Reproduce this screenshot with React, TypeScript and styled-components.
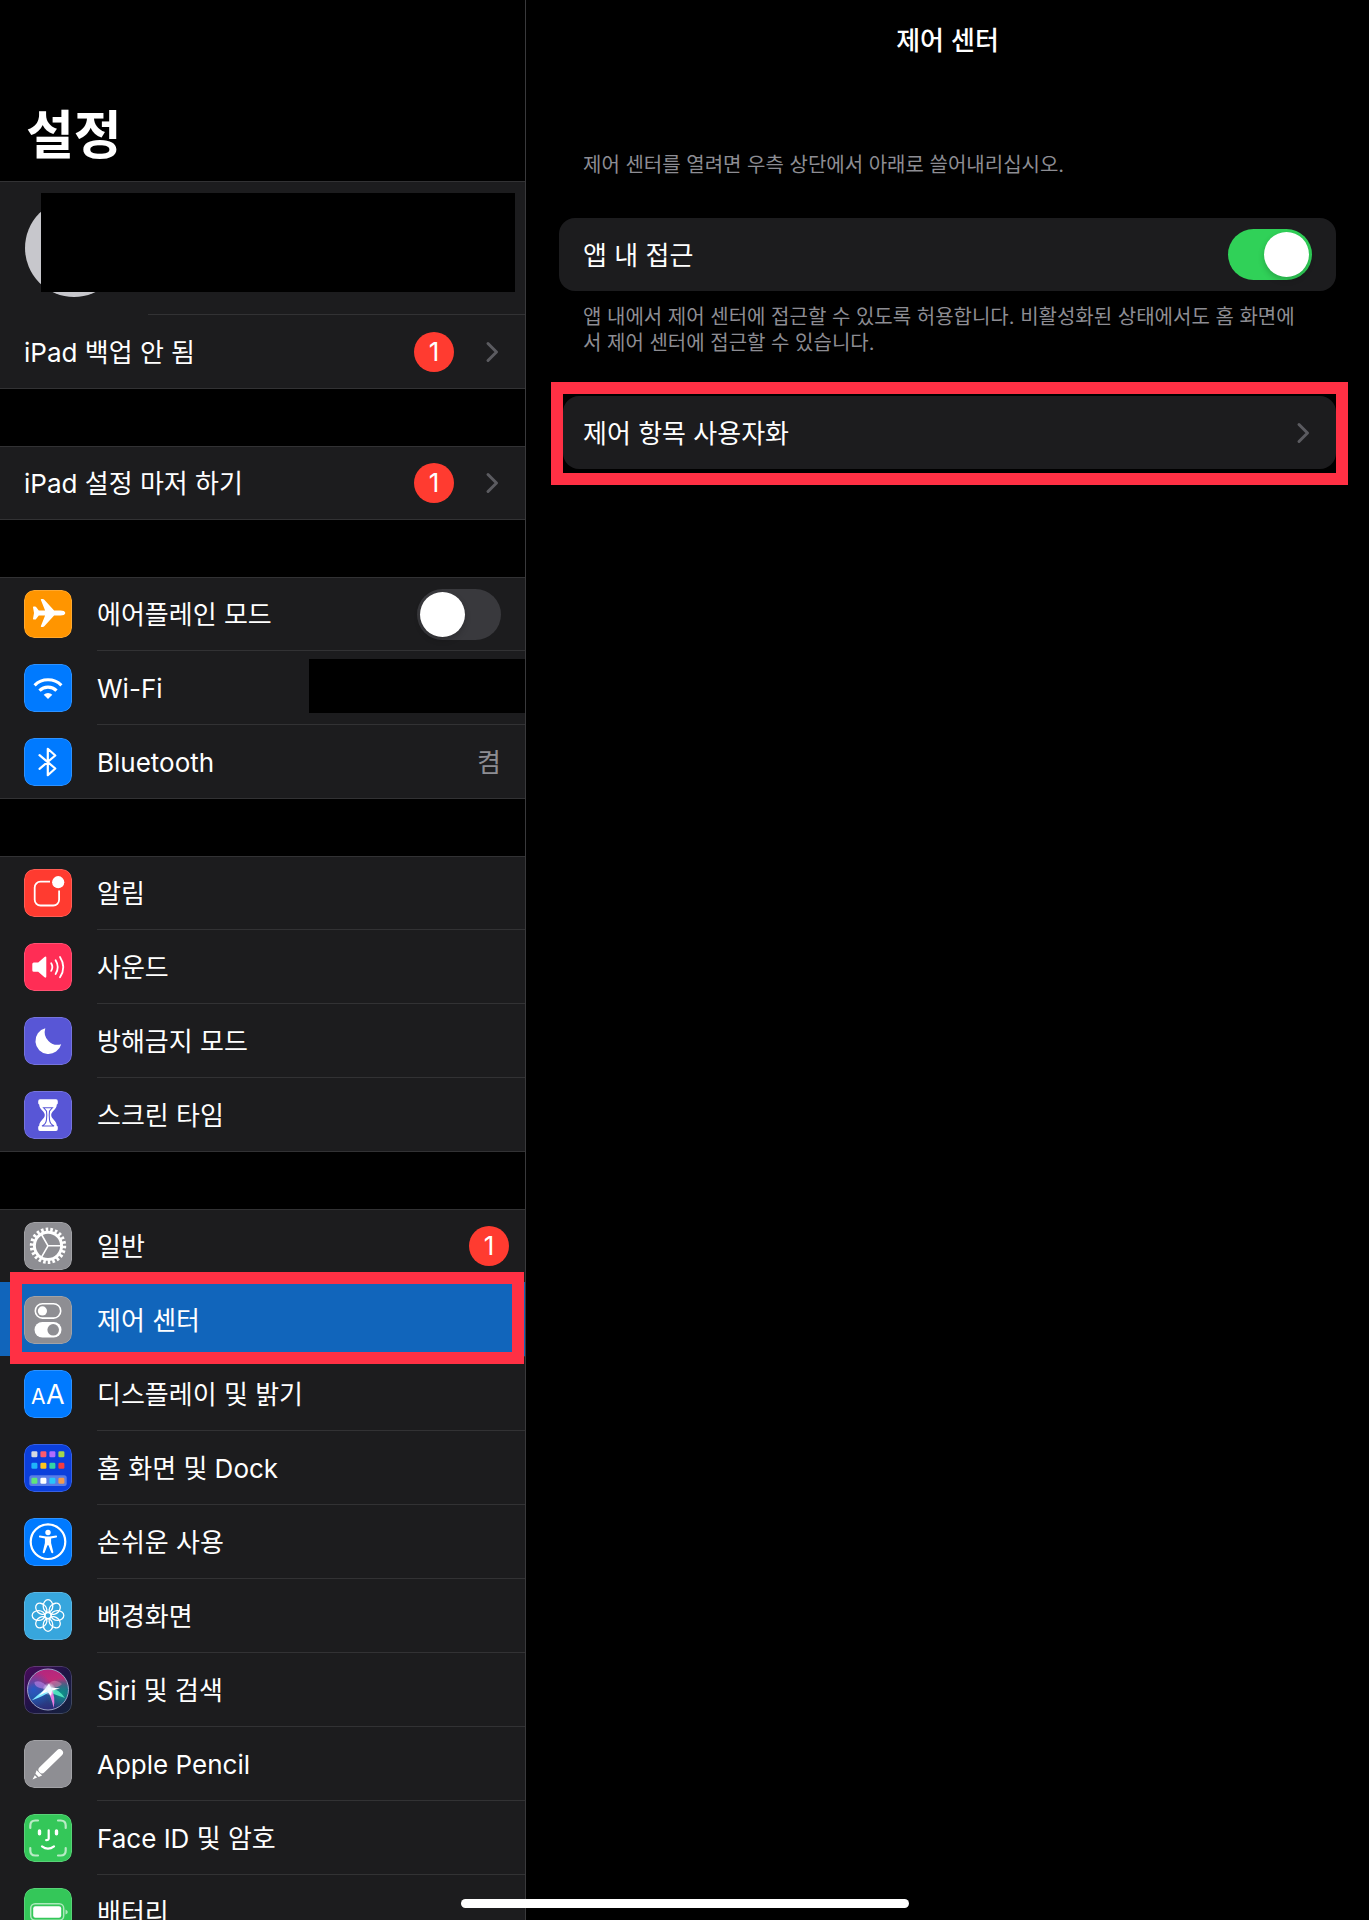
import React, { useState } from "react";
import styled, { createGlobalStyle, css } from "styled-components";

const GlobalStyle = createGlobalStyle`
  *, *::before, *::after { box-sizing: border-box; }
  body {
    margin: 0;
    background: #000;
    color: #fff;
    font-family: Inter, "Noto Sans CJK KR", sans-serif;
    font-size: 26px;
    line-height: 36px;
  }
`;

const Screen = styled.div`
  display: grid;
  grid-template-columns: minmax(320px, 526px) minmax(0, 1fr);
  height: 100vh;
  background: #000;
  overflow: hidden;
`;

const Sidebar = styled.nav`
  min-height: 0;
  border-right: 1px solid #39393b;
  overflow-y: auto;
  scrollbar-width: none;
`;

const SidebarTitle = styled.h1`
  display: flex;
  align-items: flex-end;
  height: 181px;
  margin: 0;
  padding: 0 26px 15px;
  font-size: 52px;
  line-height: 60px;
  font-weight: 700;
`;

const Groups = styled.div`
  display: flex;
  flex-direction: column;
  gap: 57px;
`;

const Group = styled.div`
  background: #1c1c1e;
  border-bottom: 1px solid #323234;
`;

const rowBase = css<{ $inset: number; $selected?: boolean }>`
  position: relative;
  display: flex;
  align-items: center;
  height: 74px;
  padding: 1px 24px 0;
  color: #fff;
  text-decoration: none;
  background: ${(p) => (p.$selected ? "#1165bb" : "transparent")};

  &::before {
    content: "";
    position: absolute;
    top: 0;
    left: ${(p) => p.$inset}px;
    right: 0;
    height: 1px;
    background: #323234;
  }

  &:first-child {
    height: 73px;
  }

  &:first-child::before {
    left: 0;
  }
`;

const LinkRow = styled.a<{ $inset: number; $selected?: boolean }>`
  ${rowBase}

  &[aria-current]::before,
  &[aria-current] + &::before {
    display: none;
  }
`;

const SwitchRow = styled.label<{ $inset: number }>`
  ${rowBase}
`;

const ProfileRow = styled.a`
  display: block;
  height: 133px;
  padding: 17px 10px 0 25px;
  border-top: 1px solid #323234;
`;

const Avatar = styled.div`
  position: relative;
  width: 98px;
  height: 98px;
  border-radius: 50%;
  background: #c7c7cc;
`;

const ProfileCover = styled.div`
  position: relative;
  height: 99px;
  margin: -104px 0 0 16px;
  background: #000;
`;

const NetworkCover = styled.span`
  width: 216px;
  height: 54px;
  margin: 0 -24px 4px 0;
  background: #000;
`;

const Tile = styled.svg`
  flex: none;
  width: 48px;
  height: 48px;
  margin-right: 25px;
  border-radius: 10px;
`;

const RowText = styled.span`
  flex: 1;
  min-width: 0;
  padding-top: 2px;
  white-space: nowrap;
`;

const RowValue = styled.span`
  padding-top: 2px;
  color: #8d8d93;
`;

const Badge = styled.span<{ $edge?: boolean }>`
  display: flex;
  align-items: center;
  justify-content: center;
  width: 40px;
  height: 40px;
  margin-right: ${(p) => (p.$edge ? -8 : 31)}px;
  border-radius: 50%;
  background: #ff3b30;
`;

const ChevronIcon = styled.svg`
  flex: none;
  width: 14px;
  height: 22px;
  margin-right: 2px;
  fill: none;
  stroke: #5b5b60;
  stroke-width: 3;
  stroke-linecap: round;
  stroke-linejoin: round;
`;

const Toggle = styled.input`
  appearance: none;
  display: flex;
  flex: none;
  width: 84px;
  height: 51px;
  margin: 0;
  padding: 3px;
  border-radius: 26px;
  background: #39393d;

  &::before {
    content: "";
    width: 45px;
    height: 45px;
    border-radius: 50%;
    background: #fff;
    box-shadow: 0 3px 6px rgba(0, 0, 0, 0.2);
  }

  &:checked {
    justify-content: flex-end;
    background: #30d158;
  }
`;

const Highlight = styled.span`
  position: absolute;
  inset: -10px 1px -8px 10px;
  z-index: 1;
  border: 12px solid #ff3044;
  pointer-events: none;
`;

const Detail = styled.main`
  display: flex;
  flex-direction: column;
  padding: 0 33px;
`;

const DetailTitle = styled.h2`
  margin: 0;
  padding: 23px 0;
  font-size: 26px;
  line-height: 36px;
  font-weight: 500;
  text-align: center;
`;

const Caption = styled.p`
  margin: 0;
  padding: 0 24px;
  color: #8d8d93;
  font-size: 20px;
  line-height: 26px;
  word-break: break-all;
`;

const Intro = styled(Caption)`
  padding-top: 70px;
  padding-bottom: 40px;
`;

const Footnote = styled(Caption)`
  padding-top: 13px;
  padding-bottom: 26px;
`;

const cardBase = css`
  display: flex;
  align-items: center;
  height: 73px;
  padding: 0 24px;
  border-radius: 16px;
  background: #1c1c1e;
  color: #fff;
  text-decoration: none;
`;

const CardSwitch = styled.label`
  ${cardBase}
`;

const CardLink = styled.a`
  ${cardBase}
  padding-left: 20px;
`;

const CardFrame = styled.div`
  margin: 0 -12px 0 -8px;
  padding: 2px 0 4px;
  border: 12px solid #ff3044;
`;

const HomeIndicator = styled.div`
  position: fixed;
  left: 50%;
  bottom: 12px;
  z-index: 2;
  width: 448px;
  height: 9px;
  margin-left: -224px;
  border-radius: 5px;
  background: #fff;
`;

function Chevron() {
  return (
    <ChevronIcon viewBox="0 0 14 22" aria-hidden="true">
      <path d="M3 2.5 11.5 11 3 19.5" />
    </ChevronIcon>
  );
}

function IconTile({ fill, children }: { fill: string; children: React.ReactNode }) {
  return (
    <Tile viewBox="0 0 48 48" aria-hidden="true">
      <rect width="48" height="48" rx="10" fill={fill} />
      {children}
      <rect x="0.5" y="0.5" width="47" height="47" rx="9.5" fill="none" stroke="#fff" strokeOpacity="0.18" />
    </Tile>
  );
}

const eighths = [0, 45, 90, 135, 180, 225, 270, 315];

const icons = {
  airplane: (
    <IconTile fill="#ff9500">
      <path
        fill="#fff"
        d="M41.3 23c0 1.7-2.3 2.5-4.8 2.5h-6.4L20.3 36.3q-.7.7-1.5.7h-1.3q-1 0-.6-1l4.2-10.5h-6.3l-2.700 3.500q-.4.5-1 .5H9.700q-.8 0-.7-.8L10 23l-1-5.700q-.1-.8.7-.8h1.400q.6 0 1 .5l2.700 3.500h6.300L16.900 10q-.4-1 .6-1h1.300q.8 0 1.500.7l9.800 10.800h6.400c2.500 0 4.800.8 4.800 2.500Z"
      />
    </IconTile>
  ),
  wifi: (
    <IconTile fill="#007aff">
      <g fill="none" stroke="#fff" strokeWidth="3.2">
        <path d="M10.600 21.300a19 19 0 0 1 26.800 0" />
        <path d="M15.500 26.600a12 12 0 0 1 17 0" />
      </g>
      <path fill="#fff" d="m24 35-4.300-4.300a6.200 6.200 0 0 1 8.600 0Z" />
    </IconTile>
  ),
  bluetooth: (
    <IconTile fill="#007aff">
      <path
        fill="none"
        stroke="#fff"
        strokeWidth="2.2"
        strokeLinejoin="round"
        strokeLinecap="round"
        d="m15.500 17.200 15.800 13.300-7.500 6.700V10.800l7.500 6.700-15.800 13.300"
      />
    </IconTile>
  ),
  notifications: (
    <IconTile fill="#ff3b30">
      <path
        fill="none"
        stroke="#fff"
        strokeWidth="1.8"
        d="M26 12.600h-9.500a5.800 5.800 0 0 0-5.800 5.800v12.300a5.800 5.800 0 0 0 5.800 5.800h12.800a5.800 5.800 0 0 0 5.800-5.800V21.500"
      />
      <circle cx="34.2" cy="13.2" r="6.1" fill="#fff" />
    </IconTile>
  ),
  sound: (
    <IconTile fill="#ff2d55">
      <path
        fill="#fff"
        d="M9.800 19.500h4.400l6.300-5.600q1.800-1.200 1.800.7v19q0 1.900-1.800.7l-6.300-5.600H9.800q-1.500 0-1.500-1.500V21q0-1.500 1.500-1.500Z"
      />
      <g fill="none" stroke="#fff" strokeWidth="1.8" strokeLinecap="round">
        <path d="M27.200 20.300q2.300 3.800 0 7.600" />
        <path d="M31.600 17.200q4.300 6.900 0 13.800" />
        <path d="M36 13.900q6.600 10.200 0 20.400" />
      </g>
    </IconTile>
  ),
  moon: (
    <IconTile fill="#5856d6">
      <path fill="#fff" d="M21.300 11.200A13.100 13.100 0 1 0 37.200 27.200 12.800 12.800 0 0 1 21.300 11.200Z" />
    </IconTile>
  ),
  hourglass: (
    <IconTile fill="#5856d6">
      <path
        fill="#fff"
        d="M16 8.200h16q1.800 0 1.800 2v2q0 .8-1 1.200c0 5-5.600 6.600-5.600 10.700s5.600 5.700 5.600 10.600q1 .4 1 1.300v2q0 2-1.800 2H16q-1.800 0-1.800-2v-2q0-.9 1-1.300c0-4.900 5.600-6.500 5.600-10.600s-5.600-5.700-5.600-10.700q-1-.4-1-1.200v-2q0-2 1.800-2Z"
      />
      <path
        fill="none"
        stroke="#5856d6"
        strokeWidth="1.1"
        d="M19.500 16.700h9q-1.800 2-3 3.500-.6 4 0 8.500.4 4.200 4.500 6.300H18q4.100-2.100 4.500-6.300.6-4.500 0-8.500-1.200-1.500-3-3.500Z"
      />
    </IconTile>
  ),
  gear: (
    <IconTile fill="#8e8e93">
      <g fill="none" stroke="#fff" transform="translate(24 23.8)">
        <circle r="16.2" strokeWidth="4" pathLength="44" strokeDasharray="1.1 0.9" />
        <circle r="13.6" strokeWidth="2.9" />
        <path strokeWidth="1.6" d="M0 0h13M0 0l-6.500-11.300M0 0l-6.500 11.300" />
      </g>
    </IconTile>
  ),
  controls: (
    <IconTile fill="#8e8e93">
      <rect x="11.3" y="7.7" width="25.4" height="14.4" rx="7.2" fill="none" stroke="#fff" strokeWidth="1.6" />
      <circle cx="18.4" cy="14.9" r="4.6" fill="#fff" />
      <rect x="10.5" y="26" width="27" height="15.6" rx="7.8" fill="#fff" />
      <circle cx="29.2" cy="33.8" r="5.8" fill="#8e8e93" />
    </IconTile>
  ),
  display: (
    <IconTile fill="#007aff">
      <text x="7" y="34" fontFamily="Inter, sans-serif" fontSize="21" fill="#fff">A</text>
      <text x="22" y="34" fontFamily="Inter, sans-serif" fontSize="27" fill="#fff">A</text>
    </IconTile>
  ),
  home: (
    <IconTile fill="#0b3fdc">
      <rect x="5.3" y="31.3" width="37.4" height="10.7" rx="2.5" fill="#fff" fillOpacity="0.32" />
      {[
        ["#d5d9e2", "#fb5a6c", "#b06cff", "#a4d64c"],
        ["#1fb4fa", "#fcc41c", "#34d3a4", "#f43b40"],
        ["#5fe57a", "#ffffff", "#27c4fb", "#f29a4e"],
      ].map((line, r) =>
        line.map((color, c) => (
          <rect key={`${r}${c}`} x={7.4 + c * 9} y={[7.2, 18.8, 33.7][r]} width="6" height="6" rx="1.3" fill={color} />
        ))
      )}
    </IconTile>
  ),
  accessibility: (
    <IconTile fill="#007aff">
      <circle cx="24" cy="23.7" r="17.3" fill="none" stroke="#fff" strokeWidth="2.2" />
      <circle cx="24" cy="14.5" r="2.7" fill="#fff" />
      <path
        fill="#fff"
        d="M15.900 17.600 22.300 18.600h3.400l6.400-1q1 0 1 .9t-.8 1l-5.200 1.100v4.400l2.200 9.100q.2 1-.8 1.200-.9.200-1.200-.7L24.500 27.300h-1L20.700 34.600q-.3.9-1.200.7-1-.2-.8-1.200l2.200-9.100v-4.400l-5.200-1.100q-.8-.1-.8-1t1-.9Z"
      />
    </IconTile>
  ),
  wallpaper: (
    <IconTile fill="#37a6dd">
      <g fill="none" stroke="#fff" strokeWidth="1.3" transform="translate(24 23.5)">
        {eighths.map((a) => (
          <ellipse key={a} cy="-9.5" rx="4.8" ry="6.3" transform={`rotate(${a})`} />
        ))}
        <circle r="3" />
      </g>
    </IconTile>
  ),
  siri: (
    <IconTile fill="url(#siri-tile)">
      <defs>
        <linearGradient id="siri-tile" x1="0" y1="0" x2="1" y2="1">
          <stop offset="0" stopColor="#4a0a5c" />
          <stop offset="0.5" stopColor="#1d1445" />
          <stop offset="1" stopColor="#14233c" />
        </linearGradient>
        <linearGradient id="siri-orb" x1="0.4" y1="0" x2="0.55" y2="1">
          <stop offset="0" stopColor="#b3267f" />
          <stop offset="0.3" stopColor="#c02a78" />
          <stop offset="0.6" stopColor="#25508f" />
          <stop offset="1" stopColor="#2d2a78" />
        </linearGradient>
        <radialGradient id="siri-teal" cx="0.85" cy="0.6" r="0.4">
          <stop offset="0" stopColor="#0f8f86" />
          <stop offset="1" stopColor="#0f8f86" stopOpacity="0" />
        </radialGradient>
        <radialGradient id="siri-blue" cx="0.15" cy="0.5" r="0.45">
          <stop offset="0" stopColor="#2459c4" />
          <stop offset="1" stopColor="#2459c4" stopOpacity="0" />
        </radialGradient>
        <radialGradient id="siri-core">
          <stop offset="0" stopColor="#fff" />
          <stop offset="0.4" stopColor="#dff3ff" stopOpacity="0.7" />
          <stop offset="1" stopColor="#fff" stopOpacity="0" />
        </radialGradient>
      </defs>
      <circle cx="24" cy="23.5" r="20.3" fill="url(#siri-orb)" />
      <circle cx="24" cy="23.5" r="20.3" fill="url(#siri-teal)" />
      <circle cx="24" cy="23.5" r="20.3" fill="url(#siri-blue)" />
      <path fill="#c78cf0" fillOpacity="0.55" d="M25 23Q10 23 10.500 16 18 13 25 23Z" />
      <path fill="#f08bb8" fillOpacity="0.45" d="M23 22Q27 10 38 18 34 23 23 22Z" />
      <path fill="#7fe8ff" d="M25 20.500Q17 26 7.500 34.500 20 30 27 25Z" />
      <path fill="#4fe0bd" d="M24 21Q35 23 41 32 32 29 23 25.500Z" />
      <path fill="#e57be0" d="M22 22Q28 32 29.500 42 32 31 27 22Z" />
      <path fill="#fff" d="M25 17.500 27 21.500 36 22.500 28 24.500 27 30 23.500 25.500 15 29.500 21.500 22.500Z" />
      <circle cx="25" cy="23" r="6.5" fill="url(#siri-core)" />
      <circle cx="24" cy="23.5" r="20.5" fill="none" stroke="#b9c4e4" strokeOpacity="0.8" />
    </IconTile>
  ),
  pencil: (
    <IconTile fill="#8e8e93">
      <path stroke="#fff" strokeWidth="7" strokeLinecap="round" d="M35.500 12.800 18 29.800" />
      <path fill="#fff" d="m12.600 30.200 5.500 5.400-3.400 1.400-3.300-3.300ZM10.800 35.200l2.300 2.400-4.600 2Z" />
    </IconTile>
  ),
  face: (
    <IconTile fill="#34c759">
      <g fill="none" stroke="#fff" strokeWidth="2.2" strokeLinecap="round">
        <path
          strokeOpacity="0.65"
          d="M6.300 14v-2.500q0-5 5-5H14M34 6.500h2.700q5 0 5 5V14M41.700 34v2.500q0 5-5 5H34M14 41.500h-2.700q-5 0-5-5V34"
        />
        <path d="M24.700 16.300v8.200q0 1.500-2.500 1.700M18 32.300q6 4.600 12 0" />
        <path strokeWidth="3.4" d="M15.500 17v2.800M32.500 17v2.800" />
      </g>
    </IconTile>
  ),
  battery: (
    <IconTile fill="#34c759">
      <rect x="6.7" y="15.8" width="33" height="16.4" rx="4.5" fill="none" stroke="#fff" strokeOpacity="0.6" strokeWidth="1.5" />
      <rect x="9.2" y="18.2" width="28" height="11.6" rx="2.2" fill="#fff" />
      <path fill="#fff" fillOpacity="0.6" d="M41.500 21.500q2.300 1 2.300 2.500t-2.300 2.500Z" />
    </IconTile>
  ),
};

type Item = { id: string; text: string; icon: keyof typeof icons; badge?: string; selected?: boolean };

const alertItems: Item[] = [
  { id: "notifications", text: "알림", icon: "notifications" },
  { id: "sounds", text: "사운드", icon: "sound" },
  { id: "do-not-disturb", text: "방해금지 모드", icon: "moon" },
  { id: "screen-time", text: "스크린 타임", icon: "hourglass" },
];

const generalItems: Item[] = [
  { id: "general", text: "일반", icon: "gear", badge: "1" },
  { id: "control-center", text: "제어 센터", icon: "controls", selected: true },
  { id: "display", text: "디스플레이 및 밝기", icon: "display" },
  { id: "home-screen", text: "홈 화면 및 Dock", icon: "home" },
  { id: "accessibility", text: "손쉬운 사용", icon: "accessibility" },
  { id: "wallpaper", text: "배경화면", icon: "wallpaper" },
  { id: "siri", text: "Siri 및 검색", icon: "siri" },
  { id: "apple-pencil", text: "Apple Pencil", icon: "pencil" },
  { id: "face-id", text: "Face ID 및 암호", icon: "face" },
  { id: "battery", text: "배터리", icon: "battery" },
];

function ItemRow({ item }: { item: Item }) {
  return (
    <LinkRow href={`#${item.id}`} $inset={97} $selected={item.selected} aria-current={item.selected ? "page" : undefined}>
      {icons[item.icon]}
      <RowText>{item.text}</RowText>
      {item.badge && <Badge $edge>{item.badge}</Badge>}
      {item.selected && <Highlight />}
    </LinkRow>
  );
}

export default function App() {
  const [airplane, setAirplane] = useState(false);
  const [inApps, setInApps] = useState(true);

  return (
    <Screen>
      <GlobalStyle />
      <Sidebar>
        <SidebarTitle>설정</SidebarTitle>
        <Groups>
          <Group>
            <ProfileRow href="#profile" aria-label="Apple ID">
              <Avatar />
              <ProfileCover />
            </ProfileRow>
            <LinkRow href="#backup" $inset={148}>
              <RowText>iPad 백업 안 됨</RowText>
              <Badge>1</Badge>
              <Chevron />
            </LinkRow>
          </Group>
          <Group>
            <LinkRow href="#setup" $inset={0}>
              <RowText>iPad 설정 마저 하기</RowText>
              <Badge>1</Badge>
              <Chevron />
            </LinkRow>
          </Group>
          <Group>
            <SwitchRow $inset={97}>
              {icons.airplane}
              <RowText>에어플레인 모드</RowText>
              <Toggle type="checkbox" role="switch" checked={airplane} onChange={(e) => setAirplane(e.target.checked)} />
            </SwitchRow>
            <LinkRow href="#wifi" $inset={97}>
              {icons.wifi}
              <RowText>Wi-Fi</RowText>
              <NetworkCover />
            </LinkRow>
            <LinkRow href="#bluetooth" $inset={97}>
              {icons.bluetooth}
              <RowText>Bluetooth</RowText>
              <RowValue>켬</RowValue>
            </LinkRow>
          </Group>
          <Group>
            {alertItems.map((item) => (
              <ItemRow key={item.id} item={item} />
            ))}
          </Group>
          <Group>
            {generalItems.map((item) => (
              <ItemRow key={item.id} item={item} />
            ))}
          </Group>
        </Groups>
      </Sidebar>
      <Detail>
        <DetailTitle>제어 센터</DetailTitle>
        <Intro>제어 센터를 열려면 우측 상단에서 아래로 쓸어내리십시오.</Intro>
        <CardSwitch>
          <RowText>앱 내 접근</RowText>
          <Toggle type="checkbox" role="switch" checked={inApps} onChange={(e) => setInApps(e.target.checked)} />
        </CardSwitch>
        <Footnote>
          앱 내에서 제어 센터에 접근할 수 있도록 허용합니다. 비활성화된 상태에서도 홈 화면에서 제어 센터에 접근할 수 있습니다.
        </Footnote>
        <CardFrame>
          <CardLink href="#customize">
            <RowText>제어 항목 사용자화</RowText>
            <Chevron />
          </CardLink>
        </CardFrame>
      </Detail>
      <HomeIndicator />
    </Screen>
  );
}
